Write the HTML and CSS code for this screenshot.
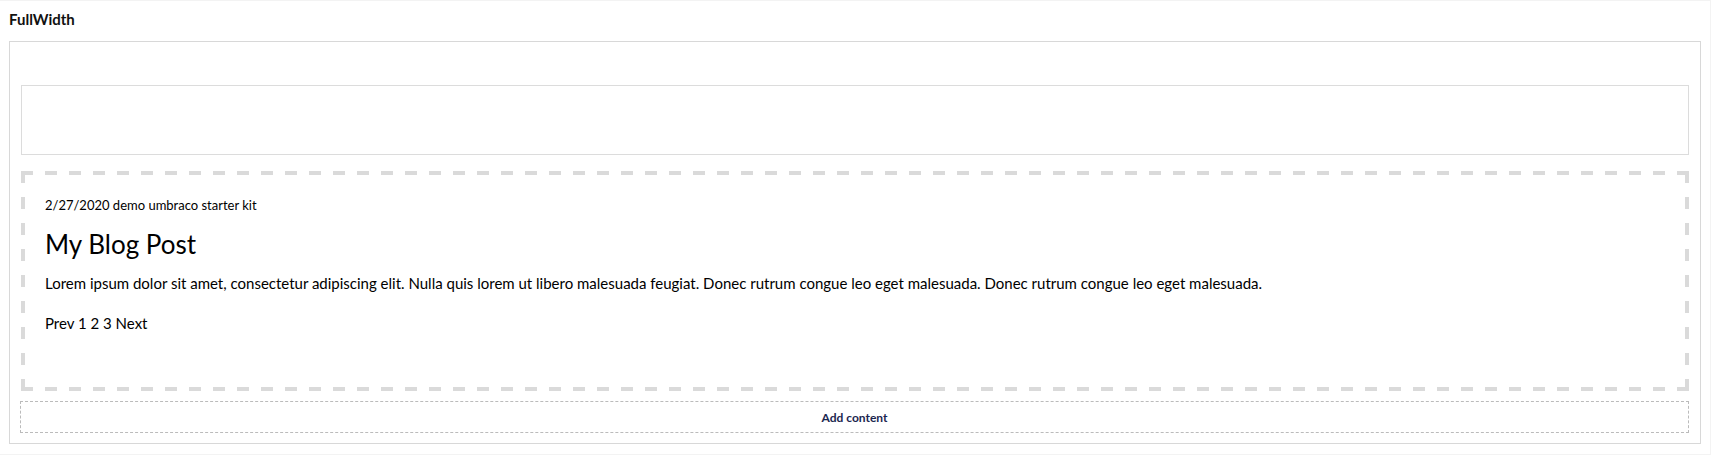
FILE: index.html
```html
<!DOCTYPE html>
<html lang="en">
<head>
    <meta charset="UTF-8">
    <meta name="viewport" content="width=device-width, initial-scale=1.0">
    <title>FullWidth</title>
    <link rel="stylesheet" href="styles.css">
</head>
<body>
    <div class="panel">
        <div class="panel-title">FullWidth</div>
        <div class="section">
            <div class="row-empty"></div>
            <div class="row-content">
                <p class="meta">2/27/2020 demo umbraco starter kit</p>
                <h1 class="post-title">My Blog Post</h1>
                <p class="post-text">Lorem ipsum dolor sit amet, consectetur adipiscing elit. Nulla quis lorem ut libero malesuada feugiat. Donec rutrum congue leo eget malesuada. Donec rutrum congue leo eget malesuada.</p>
                <p class="pager">Prev 1 2 3 Next</p>
            </div>
            <button class="add-content">Add content</button>
        </div>
    </div>
</body>
</html>
```

FILE: styles.css
```css
body {
    margin: 0;
    background-color: white;
    font-family: Lato, "Open Sans", sans-serif;
    color: #000;
}

.panel {
    width: 1711px;
    height: 455px;
    box-sizing: border-box;
    padding: 8px 9px 0 9px;
    border: 1px solid #f3f3f3;
    border-left: none;
}

.panel-title {
    font-size: 15px;
    font-weight: bold;
    line-height: 20px;
    color: #111;
    margin-bottom: 12px;
}

.section {
    border: 1px solid #d8d8d8;
    padding: 43px 11px 10px 11px;
}

.row-empty {
    height: 68px;
    border: 1px solid #dcdcdc;
}

/* dashed frame drawn with tiles so the dashes are 12px long */
.row-content {
    margin-top: 16px;
    height: 220px;
    box-sizing: border-box;
    padding: 24px 24px 0 24px;
    background-image:
        linear-gradient(90deg, #dadada 12px, transparent 12px),
        linear-gradient(90deg, #dadada 12px, transparent 12px),
        linear-gradient(#dadada 12px, transparent 12px),
        linear-gradient(#dadada 12px, transparent 12px);
    background-size: 24px 4px, 24px 4px, 4px 26px, 4px 26px;
    background-position: left top, left bottom, left top, right top;
    background-repeat: repeat-x, repeat-x, repeat-y, repeat-y;
}

.row-content p {
    margin: 0;
    line-height: 20px;
}

.meta {
    font-size: 13px;
}

.post-title {
    margin: 13px 0 0 0;
    font-size: 26px;
    font-weight: normal;
    line-height: 32px;
}

.post-text {
    margin-top: 13px !important;
    font-size: 15px;
}

.pager {
    margin-top: 20px !important;
    font-size: 15px;
}

.add-content {
    display: block;
    width: calc(100% + 1px);
    height: 32px;
    margin: 10px 0 0 -1px;
    background: white;
    border: 1px dashed #bbbbbb;
    font-family: Lato, "Open Sans", sans-serif;
    font-size: 12px;
    font-weight: bold;
    color: #1b264f;
    cursor: pointer;
}
```
